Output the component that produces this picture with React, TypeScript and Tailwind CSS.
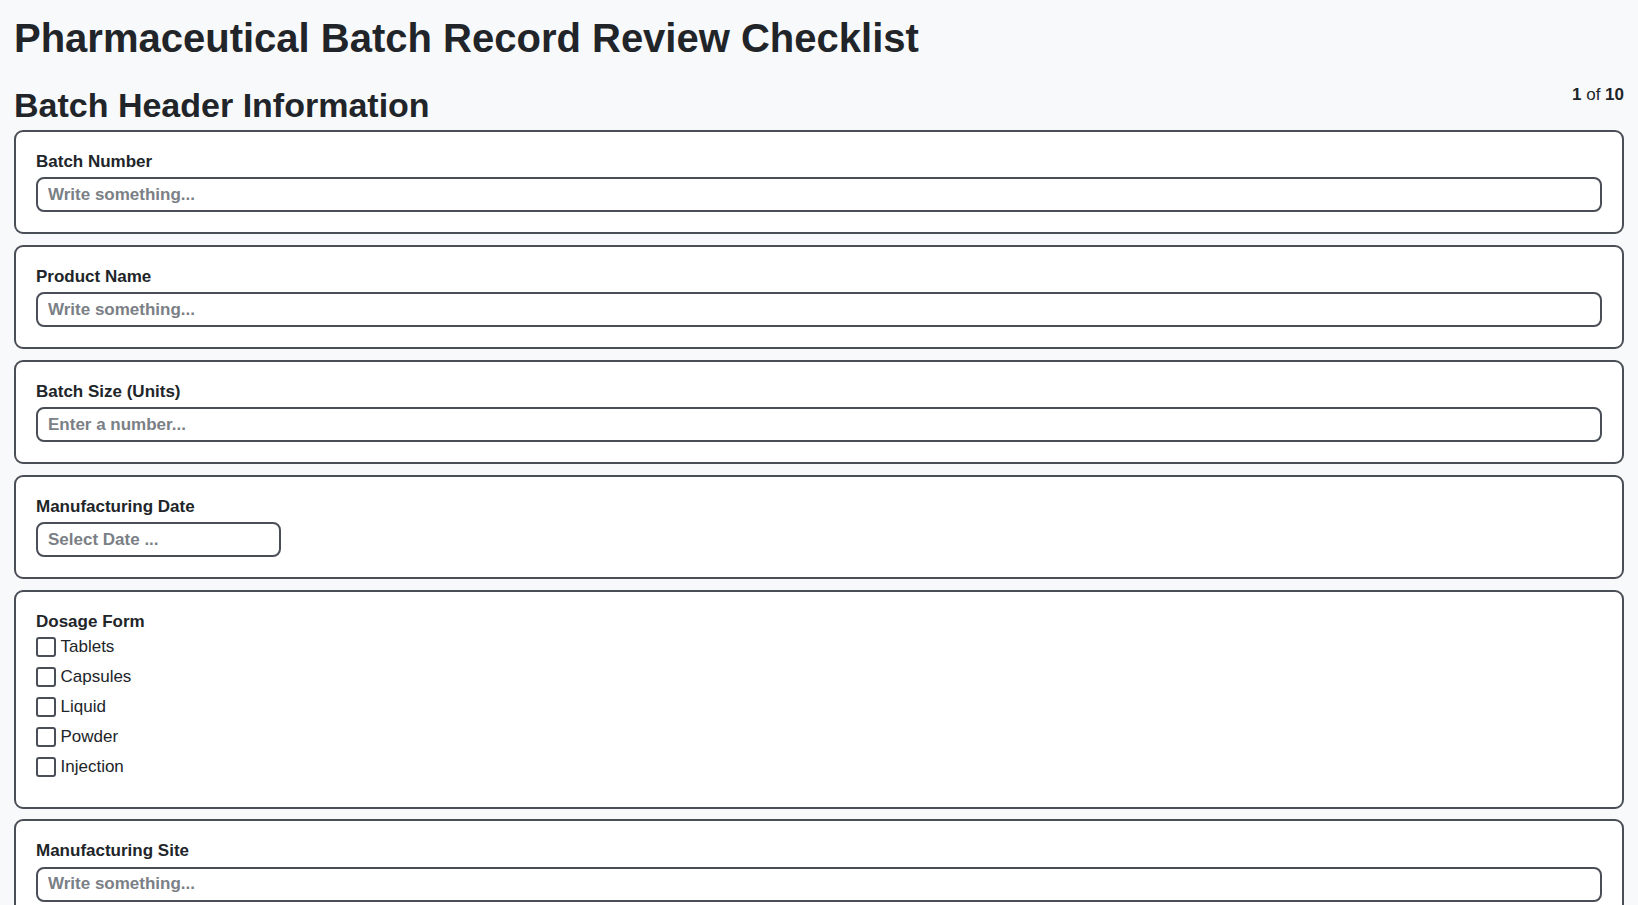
import React from "react";

const font = "font-['Liberation_Sans',Arial,Helvetica,sans-serif]";

function TextCard({ label, placeholder, narrow }: { label: string; placeholder: string; narrow?: boolean }) {
  return (
    <div className="bg-white border-2 border-[#4a4f57] rounded-[9px] p-[20px]">
      <label className="block text-[17px] leading-[1.15] font-bold mb-[6px]">{label}</label>
      <input
        type="text"
        placeholder={placeholder}
        className={`${narrow ? "w-[245px]" : "w-full"} h-[35px] border-2 border-[#4a4f57] rounded-[8px] px-[10px] text-[17px] font-bold bg-white outline-none placeholder:text-[#7b7f86] ${font}`}
      />
    </div>
  );
}

function CheckCard({ label, options }: { label: string; options: string[] }) {
  return (
    <div className="bg-white border-2 border-[#4a4f57] rounded-[9px] p-[20px]">
      <div className="text-[17px] leading-[1.15] font-bold">{label}</div>
      <div className="flex flex-col pt-[1px] mb-[4.5px]">
        {options.map((o) => (
          <label key={o} className="flex items-center h-[30px] gap-[5px] text-[17px]">
            <span className="w-[19.5px] h-[19.5px] border-2 border-[#4a4f57] rounded-[3px] bg-white shrink-0" />
            <span>{o}</span>
          </label>
        ))}
      </div>
    </div>
  );
}

export default function App() {
  return (
    <div className={`min-h-screen bg-[#f8f9fa] px-[14px] pt-[15px] pb-[20px] text-[#212529] ${font}`}>
      <h1 className="text-[40px] leading-[46px] font-bold">Pharmaceutical Batch Record Review Checklist</h1>
      <div className="flex justify-between items-start mt-[25px]">
        <h2 className="text-[34px] leading-[39px] font-bold">Batch Header Information</h2>
        <div className="text-[17px] leading-[19.5px] mt-[-0.8px]">
          <span className="font-bold">1</span> of <span className="font-bold">10</span>
        </div>
      </div>
      <div className="flex flex-col gap-[10.4px] mt-[4.8px]">
        <TextCard label="Batch Number" placeholder="Write something..." />
        <TextCard label="Product Name" placeholder="Write something..." />
        <TextCard label="Batch Size (Units)" placeholder="Enter a number..." />
        <TextCard label="Manufacturing Date" placeholder="Select Date ..." narrow />
        <CheckCard label="Dosage Form" options={["Tablets", "Capsules", "Liquid", "Powder", "Injection"]} />
        <TextCard label="Manufacturing Site" placeholder="Write something..." />
        <TextCard label="Batch Reviewer" placeholder="Write something..." />
      </div>
    </div>
  );
}
